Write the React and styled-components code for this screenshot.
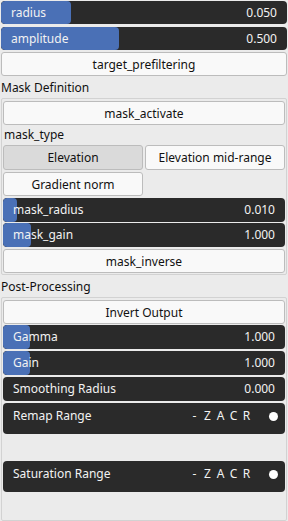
import React from "react";
import styled, { createGlobalStyle } from "styled-components";

const Global = createGlobalStyle`
  html, body { margin: 0; padding: 0; background: #ebebeb; }
  body { font-family: "Noto Sans", "Open Sans", sans-serif; font-size: 12px; color: #111; }
`;

const Page = styled.div`
  width: 288px;
  height: 521px;
  box-sizing: border-box;
  padding: 1px 1px 0 1px;
  display: flex;
  flex-direction: column;
  overflow: hidden;
`;

const SliderBox = styled.div`
  position: relative;
  height: ${(p) => p.$h || 23}px;
  margin-bottom: ${(p) => p.$mb ?? 2}px;
  background: #2a2a2a;
  border-radius: 4px;
  color: #f2f2f2;
  display: flex;
  align-items: ${(p) => (p.$top ? "flex-start" : "center")};
  justify-content: space-between;
  padding: ${(p) => (p.$top ? "5px 10px 0 10px" : "0 10px 0 10px")};
  box-sizing: border-box;
  overflow: hidden;
`;

const Fill = styled.div`
  position: absolute;
  left: 0;
  top: 0;
  bottom: 0;
  background: #4a70b6;
  border-radius: 4px;
`;

const Label = styled.span`
  position: relative;
  line-height: 16px;
`;

const Value = styled.span`
  position: relative;
  line-height: 16px;
`;

const Button = styled.div`
  height: ${(p) => p.$h || 24}px;
  box-sizing: border-box;
  border: 1px solid #bcbcbc;
  border-radius: 3px;
  background: ${(p) => (p.$pressed ? "#dadada" : "#f9f9f9")};
  display: flex;
  align-items: center;
  justify-content: center;
  margin-bottom: ${(p) => p.$mb ?? 2}px;
  color: #111;
`;

const SectionTitle = styled.div`
  height: 20px;
  line-height: 20px;
`;

const Group = styled.div`
  border: 1px solid #d2d2d2;
  border-radius: 2px;
  padding: 2px 1px 1px 1px;
  margin-bottom: ${(p) => p.$mb ?? 2}px;
  display: flex;
  flex-direction: column;
  flex: ${(p) => (p.$grow ? 1 : "none")};
`;

const SubLabel = styled.div`
  height: 18px;
  line-height: 16px;
  padding-left: 1px;
`;

const Grid2 = styled.div`
  display: grid;
  grid-template-columns: 1fr 1fr;
  column-gap: 2px;
  row-gap: 2px;
  margin-bottom: 2px;
  & > div { margin-bottom: 0; }
`;

const Flags = styled.span`
  position: relative;
  display: flex;
  align-items: center;
  line-height: 16px;
`;

const Flag = styled.span`
  width: 13px;
  text-align: center;
`;

const Dot = styled.span`
  width: 9px;
  height: 9px;
  border-radius: 50%;
  background: #fff;
  margin-left: 16px;
  margin-right: -3px;
`;

const Spacer = styled.div`
  height: ${(p) => p.$h}px;
`;

function Slider({ label, value, fill, h, mb }) {
  return (
    <SliderBox $h={h} $mb={mb}>
      {fill > 0 && <Fill style={{ width: fill }} />}
      <Label>{label}</Label>
      <Value>{value}</Value>
    </SliderBox>
  );
}

function RangeRow({ label }) {
  return (
    <SliderBox $h={31} $top $mb={0}>
      <Label>{label}</Label>
      <Flags>
        <Flag>-</Flag>
        <Flag>Z</Flag>
        <Flag>A</Flag>
        <Flag>C</Flag>
        <Flag>R</Flag>
        <Dot />
      </Flags>
    </SliderBox>
  );
}

export default function App() {
  return (
    <>
      <Global />
      <Page>
        <Slider label="radius" value="0.050" fill={70} h={23} mb={3} />
        <Slider label="amplitude" value="0.500" fill={118} h={23} mb={2} />
        <Button $mb={2}>target_prefiltering</Button>
        <SectionTitle>Mask Definition</SectionTitle>
        <Group>
          <Button>mask_activate</Button>
          <SubLabel>mask_type</SubLabel>
          <Grid2>
            <Button $pressed $h={25}>Elevation</Button>
            <Button $h={25}>Elevation mid-range</Button>
            <Button>Gradient norm</Button>
          </Grid2>
          <Slider label="mask_radius" value="0.010" fill={14} h={24} mb={1} />
          <Slider label="mask_gain" value="1.000" fill={28} h={24} mb={2} />
          <Button $mb={0}>mask_inverse</Button>
        </Group>
        <SectionTitle>Post-Processing</SectionTitle>
        <Group $grow $mb={0}>
          <Button $mb={1}>Invert Output</Button>
          <Slider label="Gamma" value="1.000" fill={27} h={24} mb={2} />
          <Slider label="Gain" value="1.000" fill={27} h={24} mb={2} />
          <Slider label="Smoothing Radius" value="0.000" fill={0} h={24} mb={2} />
          <RangeRow label="Remap Range" />
          <Spacer $h={27} />
          <RangeRow label="Saturation Range" />
        </Group>
      </Page>
    </>
  );
}
